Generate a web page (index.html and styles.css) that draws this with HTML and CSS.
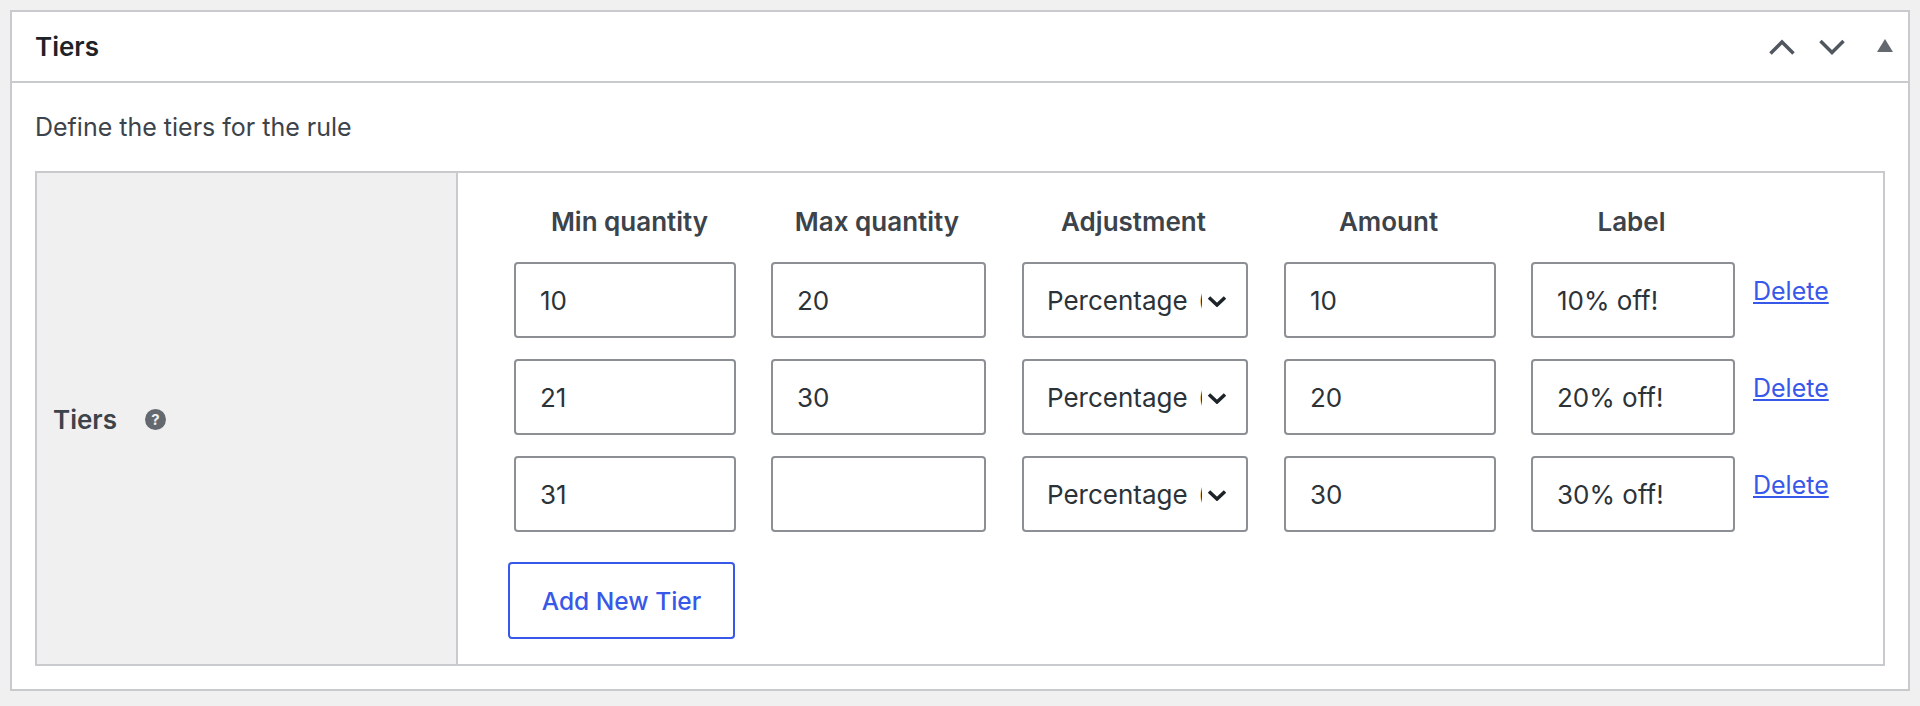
FILE: index.html
```html
<!DOCTYPE html>
<html lang="en">

<head>
    <meta charset="UTF-8">
    <meta name="viewport" content="width=device-width, initial-scale=1.0">
    <title>Tiers</title>
    <link rel="stylesheet" href="styles.css">
</head>

<body>
    <div class="postbox">
        <div class="postbox-header">
            <h2>Tiers</h2>
            <div class="handle-actions">
                <button class="handle-button" aria-label="Move up">
                    <svg width="28" height="18" viewBox="0 0 28 18"><path d="M2.5 15.5 14 4l11.5 11.5" /></svg>
                </button>
                <button class="handle-button" aria-label="Move down">
                    <svg width="28" height="18" viewBox="0 0 28 18"><path d="M2.5 3 14 14.500 25.500 3" /></svg>
                </button>
                <button class="handle-button toggle" aria-label="Toggle panel">
                    <svg width="16" height="13" viewBox="0 0 16 13"><polygon points="8,0 16,13 0,13" /></svg>
                </button>
            </div>
        </div>

        <div class="inside">
            <p class="description">Define the tiers for the rule</p>

            <div class="form-table">
                <div class="field-label">
                    <span>Tiers</span>
                    <span class="help-tip">?</span>
                </div>

                <div class="field-body">
                    <div class="tier-grid">
                        <div class="col-head col-min">Min quantity</div>
                        <div class="col-head col-max">Max quantity</div>
                        <div class="col-head col-adj">Adjustment</div>
                        <div class="col-head col-amt">Amount</div>
                        <div class="col-head col-lab">Label</div>
                        <div></div>

                        <!-- tier 1 -->
                        <input class="col-min" type="text" value="10">
                        <input class="col-max" type="text" value="20">
                        <div class="select-wrap col-adj">
                            <select><option>Percentage (%)</option></select>
                            <svg width="20" height="12" viewBox="0 0 20 12"><path d="M2 2.500 10 10l8-7.500" /></svg>
                        </div>
                        <input class="col-amt" type="text" value="10">
                        <input class="col-lab" type="text" value="10% off!">
                        <a class="delete-link" href="#">Delete</a>

                        <!-- tier 2 -->
                        <input class="col-min" type="text" value="21">
                        <input class="col-max" type="text" value="30">
                        <div class="select-wrap col-adj">
                            <select><option>Percentage (%)</option></select>
                            <svg width="20" height="12" viewBox="0 0 20 12"><path d="M2 2.500 10 10l8-7.500" /></svg>
                        </div>
                        <input class="col-amt" type="text" value="20">
                        <input class="col-lab" type="text" value="20% off!">
                        <a class="delete-link" href="#">Delete</a>

                        <!-- tier 3 -->
                        <input class="col-min" type="text" value="31">
                        <input class="col-max" type="text" value="">
                        <div class="select-wrap col-adj">
                            <select><option>Percentage (%)</option></select>
                            <svg width="20" height="12" viewBox="0 0 20 12"><path d="M2 2.500 10 10l8-7.500" /></svg>
                        </div>
                        <input class="col-amt" type="text" value="30">
                        <input class="col-lab" type="text" value="30% off!">
                        <a class="delete-link" href="#">Delete</a>
                    </div>

                    <button class="add-tier">Add New Tier</button>
                </div>
            </div>
        </div>
    </div>
</body>

</html>
```

FILE: styles.css
```css
* {
    box-sizing: border-box;
}

html, body {
    height: 100%;
}

body {
    font-family: Inter, "Noto Sans", sans-serif;
    font-size: 25px;
    background-color: #f0f0f1;
    color: #3c434a;
    margin: 0;
    padding: 10px;
}

.postbox {
    background: #fff;
    border: 2px solid #c9cacd;
    height: 681px;
}

.postbox-header {
    display: flex;
    justify-content: space-between;
    align-items: center;
    height: 71px;
    padding: 0 15px 0 23px;
    border-bottom: 2px solid #c9cacd;
}

.postbox-header h2 {
    margin: 0;
    font-size: 26px;
    font-weight: 600;
    color: #1d2327;
}

.handle-actions {
    display: flex;
    align-items: center;
}

.handle-button {
    display: flex;
    padding: 0;
    margin: 0 0 0 22px;
    border: none;
    background: none;
    cursor: pointer;
}

.handle-button path {
    fill: none;
    stroke: #50575e;
    stroke-width: 3.5;
}

.handle-button polygon {
    fill: #646970;
}

.handle-button.toggle {
    margin-left: 31px;
    margin-bottom: 2px;
}

.inside {
    padding: 0 23px;
}

.description {
    margin: 0;
    padding-top: 30px;
    height: 88px;
    line-height: 29px;
}

.form-table {
    display: flex;
    height: 495px;
    border: 2px solid #c9cacd;
}

.field-label {
    display: flex;
    align-items: center;
    gap: 28px;
    width: 421px;
    padding: 2px 0 0 16px;
    font-size: 26px;
    font-weight: 600;
    background-color: #f0f0f0;
    border-right: 2px solid #c9cacd;
}

.help-tip {
    display: flex;
    align-items: center;
    justify-content: center;
    width: 21px;
    height: 21px;
    border-radius: 50%;
    font-size: 15px;
    font-weight: 700;
    color: #f0f0f0;
    background-color: #646970;
}

.field-body {
    flex: 1;
    padding: 33px 0 0 50px;
}

.tier-grid {
    display: grid;
    grid-template-columns: 257px 251px 262px 247px 222px auto;
    grid-auto-rows: 76px;
    grid-template-rows: 35px;
    row-gap: 21px;
    padding-left: 6px;
    margin-bottom: 30px;
}

.tier-grid > div.col-head {
    font-size: 26px;
    font-weight: 600;
    text-align: center;
    align-self: start;
    line-height: 32px;
    padding-right: 3px;
}

.col-min { width: 222px; }
.col-max { width: 215px; }
.col-adj { width: 226px; }
.col-amt { width: 212px; }
.col-lab { width: 204px; }

.tier-grid > div.col-head.col-min {
    padding-left: 9px;
    padding-right: 0;
}

input, select {
    height: 76px;
    padding: 0 24px;
    font-family: inherit;
    font-size: 26px;
    color: #2c3338;
    background: #fff;
    border: 2px solid #8c8f94;
    border-radius: 4px;
}

.select-wrap {
    position: relative;
}

select {
    width: 100%;
    appearance: none;
    padding-left: 23px;
    padding-right: 44px;
    word-spacing: 3px;
}

.select-wrap svg {
    position: absolute;
    top: 33px;
    right: 21px;
    pointer-events: none;
}

.select-wrap path {
    fill: none;
    stroke: #1d2327;
    stroke-width: 3.5;
}

.delete-link {
    align-self: start;
    margin-top: 15px;
    color: #3858e9;
    line-height: 29px;
}

.add-tier {
    display: block;
    width: 227px;
    height: 77px;
    padding: 0;
    font-family: inherit;
    font-size: 24.5px;
    font-weight: 500;
    color: #3858e9;
    background: #fff;
    border: 2px solid #3858e9;
    border-radius: 4px;
    cursor: pointer;
}
```
